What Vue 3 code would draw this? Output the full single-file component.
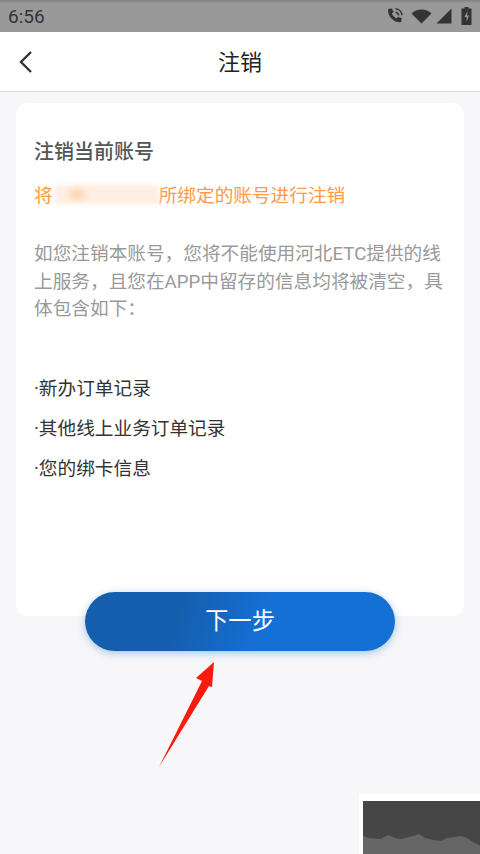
<script setup>
const items = ['·新办订单记录', '·其他线上业务订单记录', '·您的绑卡信息']
</script>

<template>
  <div class="page">
    <header class="status">
      <span class="time">6:56</span>
      <div class="status-icons">
        <svg class="phone" width="18" height="18" viewBox="0 0 18 18">
          <path d="M3.2 1.8 6 1.4l1.5 3.7-1.700 1.500c.8 1.900 2.700 3.900 4.700 4.800l1.600-1.700 3.600 1.600-.4 2.900c-.1.6-.6 1-1.200 1C7.300 15.300 2 9.700 2 3c0-.6.5-1.100 1.200-1.200Z" fill="#333"/>
          <path d="M9.500 5.200c1.700.2 3 1.500 3.200 3.200M9.500 1.800c3.500.2 6.200 3 6.500 6.500" fill="none" stroke="#333" stroke-width="1.500"/>
        </svg>
        <svg class="wifi" width="21" height="15" viewBox="0 0 21 15"><path d="M.5 4.500C3.200 1.800 6.600.5 10.500.5s7.300 1.300 10 4L10.500 14.500Z" fill="#333"/></svg>
        <svg class="signal" width="16" height="16" viewBox="0 0 16 16"><path d="M15.500.5v15H.5Z" fill="#333"/></svg>
        <svg class="battery" width="11" height="18" viewBox="0 0 11 18"><path d="M3.500 0h4v1.500H10.500V18H.5V1.500h3Z" fill="#333"/><path d="M6.500 4 3.500 10h2v4.500l2.500-6H6Z" fill="#999"/></svg>
      </div>
    </header>

    <nav class="nav">
      <svg class="back" width="16" height="24" viewBox="0 0 16 24"><path d="M13 2 3 12l10 10" fill="none" stroke="#333" stroke-width="2.400"/></svg>
      <h1 class="nav-title">注销</h1>
    </nav>

    <main class="main">
      <section class="card">
        <h2 class="heading">注销当前账号</h2>
        <p class="warn">
          <span>将</span><span class="masked"><i class="blur"></i></span><span>所绑定的账号进行注销</span>
        </p>
        <p class="desc">如您注销本账号，您将不能使用河北ETC提供的线上服务，且您在APP中留存的信息均将被清空，具体包含如下：</p>
        <ul class="list">
          <li v-for="item in items" :key="item">{{ item }}</li>
        </ul>
      </section>
      <button class="next" type="button">下一步</button>
    </main>

    <svg class="arrow" width="70" height="120" viewBox="0 0 70 120">
      <path d="M1 107 44 21 38 18 56 2 54 27 51 26Z" fill="#fb1a0e"/>
    </svg>

    <div class="thumb">
      <svg class="thumb-art" width="117" height="53" viewBox="0 0 117 53" preserveAspectRatio="none">
        <rect width="117" height="53" fill="#464646"/>
        <path d="M0 35 5 37 18 38 25 34 32 37 38 38 50 35 56 33 62 37 70 39 78 40 84 37 92 36 98 35 104 37 110 41 117 45V53H0Z" fill="#666"/>
      </svg>
    </div>
  </div>
</template>

<style scoped>
.page {
  position: relative;
  width: 480px;
  height: 854px;
  overflow: hidden;
  background: #f7f7fa;
  font-family: Roboto, "Noto Sans CJK SC", sans-serif;
}
.status {
  height: 32px;
  box-sizing: border-box;
  display: flex;
  align-items: center;
  justify-content: space-between;
  padding: 0 8px 0 8px;
  background: linear-gradient(#7f7f7f 0, #999 3px);
}
.time {
  font-size: 19px;
  color: #333;
}
.status-icons {
  display: flex;
  align-items: center;
}
.wifi { margin-left: 7px; }
.signal { margin-left: 3.5px; }
.battery { margin-left: 9.5px; }
.nav {
  position: relative;
  height: 60px;
  box-sizing: border-box;
  display: flex;
  align-items: center;
  justify-content: center;
  background: #fff;
  border-bottom: 1px solid #dcdcdc;
}
.back {
  position: absolute;
  left: 18px;
  top: 18px;
}
.nav-title {
  margin: 0 0 3px;
  font-size: 22px;
  font-weight: 400;
  color: #222;
}
.main {
  display: flex;
  flex-direction: column;
  align-items: center;
  padding: 11px 16px 0;
}
.card {
  align-self: stretch;
  height: 513px;
  box-sizing: border-box;
  padding: 34px 18px 0;
  background: #fff;
  border-radius: 12px;
}
.heading {
  margin: 0;
  font-size: 20px;
  line-height: 30px;
  font-weight: 500;
  color: #555;
}
.warn {
  display: flex;
  margin: 15px 0 0;
  font-size: 18.67px;
  line-height: 28px;
  color: #ff9a45;
}
.masked {
  position: relative;
  width: 106px;
}
.blur {
  position: absolute;
  left: 2px;
  right: 0;
  top: 3px;
  height: 19px;
  background:
    radial-gradient(ellipse 12px 9px at 22px 9px, #ffcfa6, transparent),
    #ffeee2;
  filter: blur(2px);
}
.desc {
  margin: 31px 0 0;
  font-size: 18.67px;
  line-height: 27.5px;
  color: #999;
}
.list {
  margin: 45px 0 0;
  padding: 0;
  list-style: none;
  font-size: 18.67px;
  line-height: 40px;
  color: #333;
}
.next {
  position: relative;
  width: 310px;
  height: 59px;
  margin-top: -24px;
  padding: 0 0 5px;
  border: 0;
  border-radius: 30px;
  background: linear-gradient(105deg, #155ead 0, #155ead 30%, #1570d6 58%, #1570d6 100%);
  box-shadow: 0 2px 8px rgba(21, 94, 173, .35);
  font-family: inherit;
  font-size: 23.33px;
  color: #fff;
}
.arrow {
  position: absolute;
  left: 158px;
  top: 660px;
}
.thumb {
  position: absolute;
  left: 359px;
  top: 794px;
  width: 121px;
  height: 60px;
  padding: 7px 0 0 4px;
  box-sizing: border-box;
  background: #fff;
}
.thumb-art { display: block; }
</style>
